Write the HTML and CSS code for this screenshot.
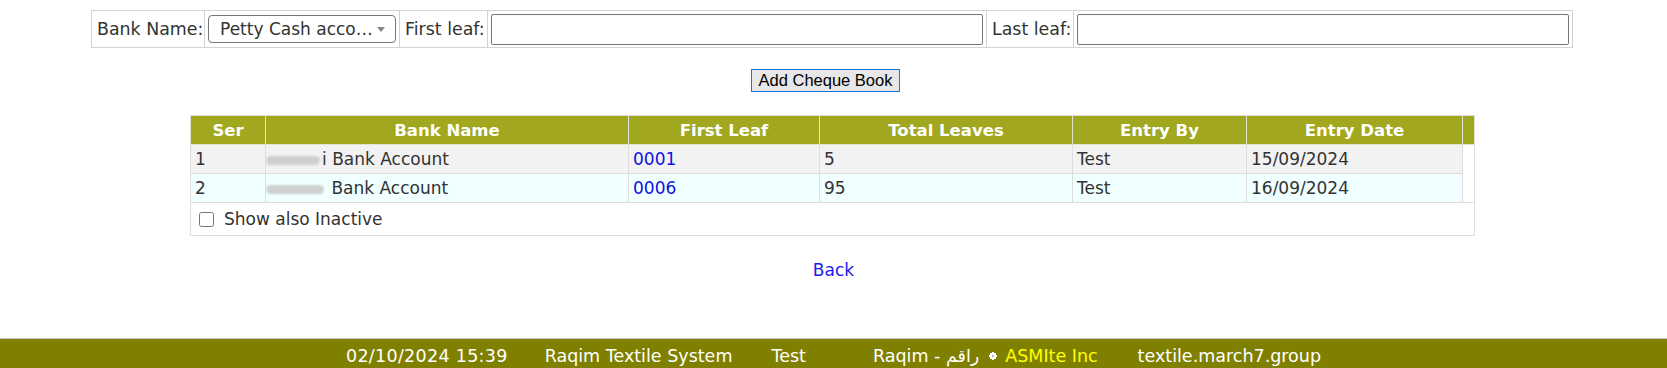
FILE: index.html
```html
<!doctype html>
<html lang="en">
  <head>
    <meta charset="UTF-8" />
    <meta name="viewport" content="width=device-width, initial-scale=1.0" />
    <title>Cheque Books</title>
    <link rel="stylesheet" href="styles.css">
  </head>
  <body>
    <div class="page">
      <form class="form-add">
        <table class="form-table">
          <colgroup>
            <col class="f-c1" />
            <col class="f-c2" />
            <col class="f-c3" />
            <col class="f-c4" />
            <col class="f-c5" />
            <col class="f-c6" />
          </colgroup>
          <tr>
            <td class="lbl">Bank Name:</td>
            <td>
              <span class="select-wrap">
                <select class="bank-select">
                  <option>Petty Cash account</option>
                </select>
              </span>
            </td>
            <td class="lbl">First leaf:</td>
            <td><input type="text" class="leaf-input" /></td>
            <td class="lbl">Last leaf:</td>
            <td><input type="text" class="leaf-input" /></td>
          </tr>
        </table>
        <div class="actions">
          <button type="button" class="add-button">Add Cheque Book</button>
        </div>
      </form>

      <table class="grid">
        <colgroup>
          <col class="c-ser" />
          <col class="c-bank" />
          <col class="c-first" />
          <col class="c-total" />
          <col class="c-by" />
          <col class="c-date" />
          <col class="c-gap" />
        </colgroup>
        <thead>
          <tr>
            <th>Ser</th>
            <th>Bank Name</th>
            <th>First Leaf</th>
            <th>Total Leaves</th>
            <th>Entry By</th>
            <th>Entry Date</th>
            <th></th>
          </tr>
        </thead>
        <tbody>
          <tr class="row-odd">
            <td>1</td>
            <td><span class="blur blur-1"></span>i Bank Account</td>
            <td><a href="#" class="leaf-link">0001</a></td>
            <td>5</td>
            <td>Test</td>
            <td>15/09/2024</td>
            <td class="gap"></td>
          </tr>
          <tr class="row-even">
            <td>2</td>
            <td><span class="blur blur-2"></span> Bank Account</td>
            <td><a href="#" class="leaf-link">0006</a></td>
            <td>95</td>
            <td>Test</td>
            <td>16/09/2024</td>
            <td class="gap"></td>
          </tr>
          <tr class="row-check">
            <td colspan="7">
              <label class="check-label"><input type="checkbox" class="check" /> Show also Inactive</label>
            </td>
          </tr>
        </tbody>
      </table>

      <div class="back">
        <a href="#" class="back-link">Back</a>
      </div>
    </div>

    <div class="footer">
      <span class="f-date">02/10/2024 15:39</span>
      <span class="f-sys">Raqim Textile System</span>
      <span class="f-user">Test</span>
      <span class="f-brand">Raqim - راقم</span>
      <span class="f-logo">
        <svg width="8" height="8" viewBox="0 0 8 8">
          <rect x="1" y="1" width="6" height="6" fill="#fff" />
          <rect x="0" y="3" width="8" height="2" fill="#fff" />
          <rect x="3" y="0" width="2" height="8" fill="#fff" />
          <rect x="3" y="3" width="2" height="2" fill="#bbb" />
        </svg>
      </span>
      <span class="f-company">ASMIte Inc</span>
      <span class="f-host">textile.march7.group</span>
    </div>
  </body>
</html>
```

FILE: styles.css
```css
html,
body {
  margin: 0;
  padding: 0;
}
body {
  display: flex;
  flex-direction: column;
  min-height: 100vh;
  font-family: "DejaVu Sans", Verdana, sans-serif;
  font-size: 17px;
  color: #333;
  background-color: #fff;
}
.page {
  flex: 1;
  padding-top: 10px;
}

/* add form */
.form-table {
  width: 1481px;
  margin-left: 91px;
  border-collapse: collapse;
  table-layout: fixed;
}
.f-c1 { width: 113px; }
.f-c2 { width: 195px; }
.f-c3 { width: 88px; }
.f-c4 { width: 499px; }
.f-c5 { width: 87px; }
.f-c6 { width: 499px; }

.form-table td {
  border: 1px solid #d3d3d3;
  height: 36px;
  padding: 0 3px;
  white-space: nowrap;
  overflow: hidden;
}
.form-table td.lbl {
  padding-left: 5px;
  font-size: 17.4px;
}
.select-wrap {
  position: relative;
  display: inline-block;
}
.select-wrap::after {
  content: "";
  position: absolute;
  right: 11px;
  top: 12px;
  border-left: 4px solid transparent;
  border-right: 4px solid transparent;
  border-top: 5px solid #888;
}
.bank-select {
  appearance: none;
  -webkit-appearance: none;
  width: 188px;
  height: 28px;
  padding: 0 22px 0 11px;
  border: 1px solid #767676;
  border-radius: 4px;
  background-color: #fff;
  font-family: inherit;
  font-size: 17px;
  color: #333;
  text-overflow: ellipsis;
  vertical-align: middle;
}
.leaf-input {
  box-sizing: border-box;
  width: 492px;
  height: 31px;
  border: 1px solid #767676;
  border-radius: 2px;
  vertical-align: middle;
}

.actions {
  display: flex;
  justify-content: center;
  padding-right: 16px;
  margin-top: 21px;
}
.add-button {
  box-sizing: border-box;
  width: 149px;
  height: 23px;
  padding: 0;
  border: 1px solid #1a73d9;
  border-radius: 0;
  background-color: #e7e7e7;
  font-family: "Liberation Sans", Arial, sans-serif;
  font-size: 16.5px;
  color: #000;
}

/* grid */
.grid {
  width: 1284px;
  margin: 23px 0 0 190px;
  border-collapse: collapse;
  table-layout: fixed;
}
.c-ser { width: 75px; }
.c-bank { width: 363px; }
.c-first { width: 191px; }
.c-total { width: 253px; }
.c-by { width: 174px; }
.c-date { width: 216px; }
.c-gap { width: 12px; }

.grid th {
  height: 28px;
  padding: 0;
  background-color: #a1a81f;
  color: #fff;
  font-weight: bold;
  font-size: 16.5px;
  text-align: center;
  border: 1px solid #e2e2d0;
  border-top-color: #ddd;
}
.grid td {
  height: 28px;
  padding: 0 4px;
  border: 1px solid #ddd;
  white-space: nowrap;
  overflow: hidden;
}
.row-odd td {
  background-color: #f2f2f2;
}
.row-even td {
  background-color: #f0ffff;
}
.grid td.gap {
  background-color: #fff;
  border-top: none;
  border-bottom: none;
}
.row-check td {
  height: 32px;
  padding: 0 8px;
  background-color: #fff;
}
.blur {
  display: inline-block;
  height: 9px;
  vertical-align: middle;
  margin-left: -4px;
  border-radius: 5px;
  background-color: #cfcfcf;
  filter: blur(1px);
}
.blur-1 {
  width: 54px;
  margin-right: 2px;
}
.blur-2 {
  width: 58px;
  margin-right: 2px;
}
.leaf-link {
  color: #1010e0;
  text-decoration: none;
}
.check-label {
  display: flex;
  align-items: center;
  gap: 10px;
}
.check {
  width: 15px;
  height: 15px;
  margin: 0;
}

.back {
  text-align: center;
  margin-top: 24px;
}
.back-link {
  color: #1a1aee;
  text-decoration: none;
}

/* footer */
.footer {
  display: flex;
  justify-content: center;
  align-items: center;
  height: 30px;
  padding-top: 4px;
  box-sizing: border-box;
  border-top: 1px solid #c8c8c8;
  background-color: #808000;
  color: #fff;
  font-size: 17.5px;
  white-space: nowrap;
}
.f-date {
  letter-spacing: 0.3px;
}
.f-sys {
  margin-left: 37px;
}
.f-user {
  margin-left: 39px;
}
.f-brand {
  margin-left: 67px;
}
.f-logo {
  display: flex;
  margin-left: 10px;
  margin-right: 8px;
}
.f-host {
  margin-left: 40px;
}
.f-company {
  color: #ffff00;
}
```
